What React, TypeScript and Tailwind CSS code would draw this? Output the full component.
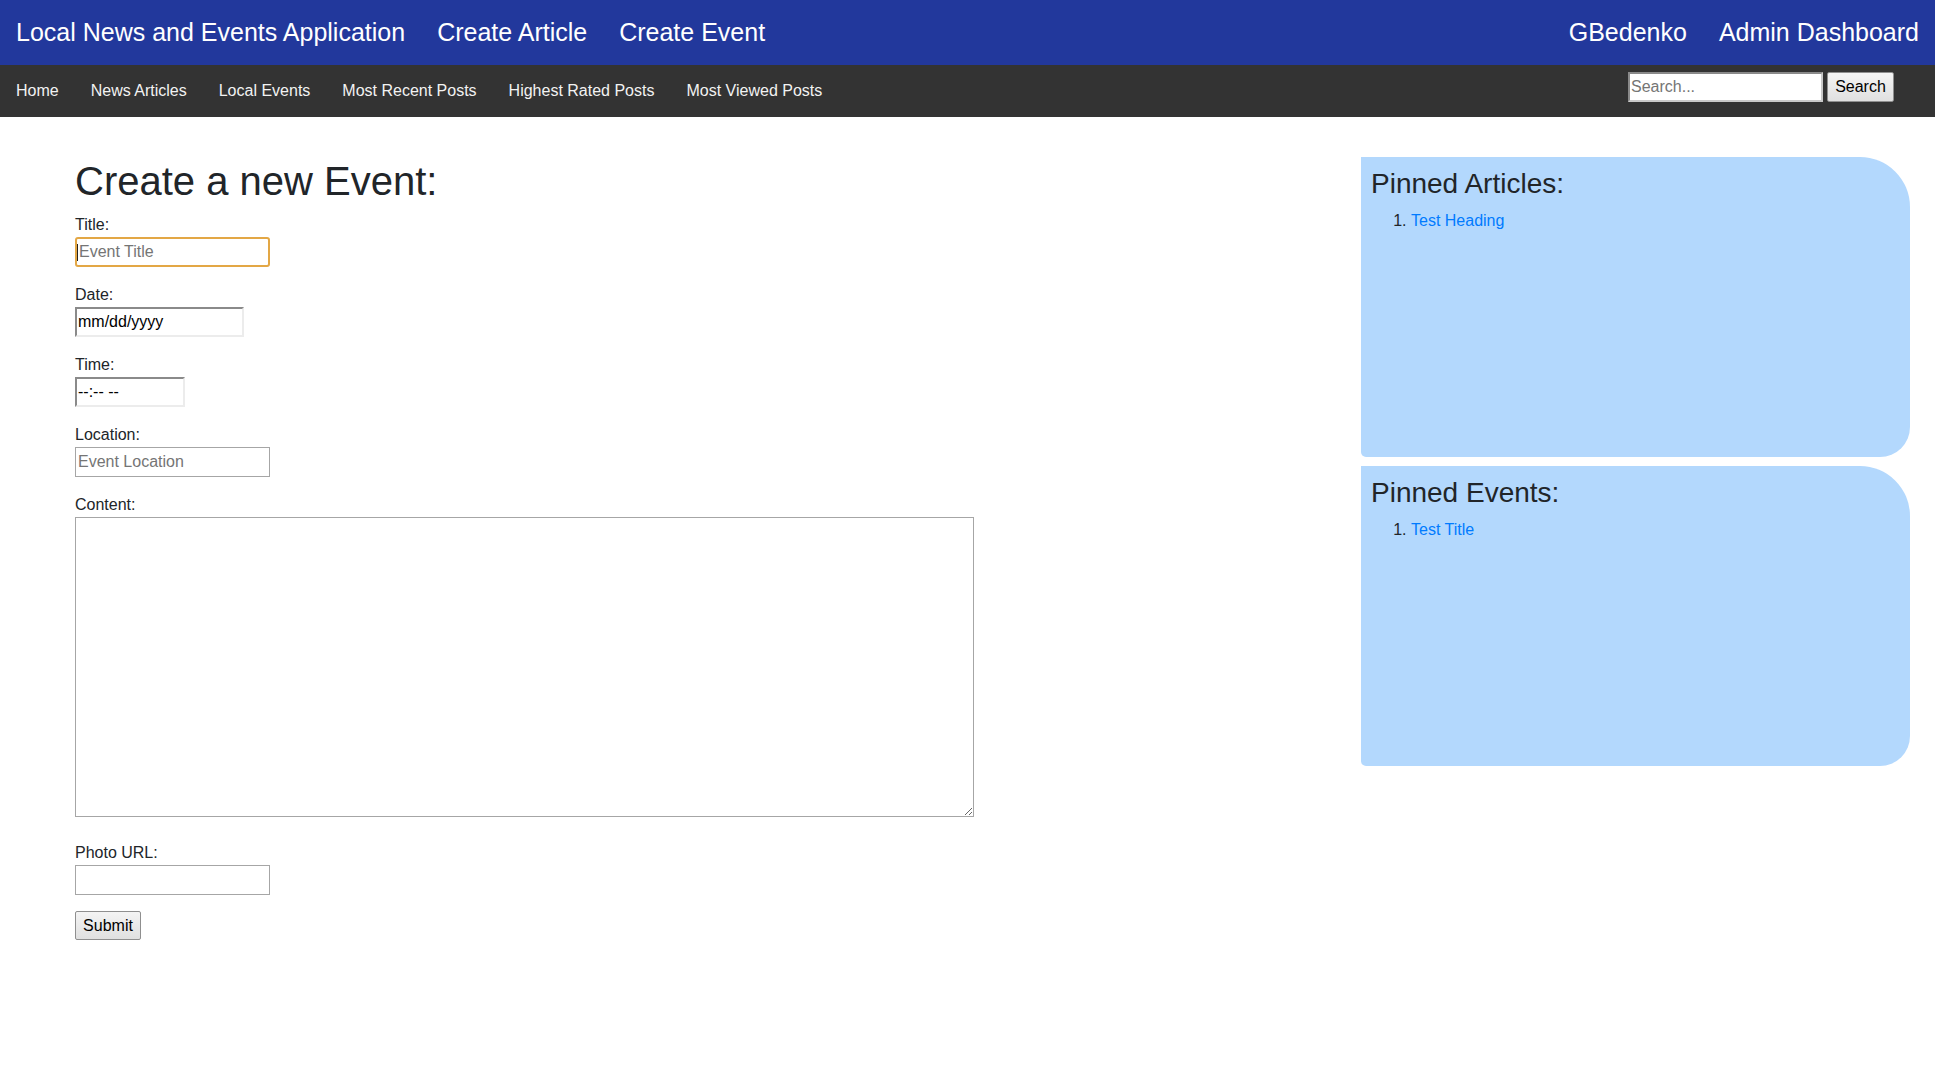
import React from 'react'

const font = { fontFamily: '"Liberation Sans", Arial, sans-serif' }

function Field({ label, children, last }: { label: string; children: React.ReactNode; last?: boolean }) {
  return (
    <div className={last ? 'mb-[24px]' : 'mb-4'}>
      <label className="block text-[16px] leading-[24px] text-[#212529]">{label}</label>
      {children}
    </div>
  )
}

export default function App() {
  const topLinks = ['Local News and Events Application', 'Create Article', 'Create Event']
  const navLinks = ['Home', 'News Articles', 'Local Events', 'Most Recent Posts', 'Highest Rated Posts', 'Most Viewed Posts']

  return (
    <div className="min-h-screen bg-white" style={font}>
      <header className="h-[65px] bg-[#22389c] flex items-center justify-between">
        <div className="flex items-center">
          {topLinks.map((l) => (
            <a key={l} href="#" className="px-4 text-[25px] leading-[29px] text-white">
              {l}
            </a>
          ))}
        </div>
        <div className="flex items-center">
          <a href="#" className="px-4 text-[25px] leading-[29px] text-white">GBedenko</a>
          <a href="#" className="px-4 text-[25px] leading-[29px] text-white">Admin Dashboard</a>
        </div>
      </header>

      <nav className="h-[52px] bg-[#333333] flex justify-between">
        <div className="flex items-center">
          {navLinks.map((l) => (
            <a key={l} href="#" className="px-4 text-[16px] leading-[20px] text-[#f2f2f2]">
              {l}
            </a>
          ))}
        </div>
        <div className="flex items-start pt-[7px] pr-[41px] gap-[4px]">
          <input
            type="text"
            placeholder="Search..."
            className="w-[195px] h-[30px] px-[1px] bg-white text-[16px] text-black placeholder:text-[#757575] border-2 border-t-[#8a8a8a] border-l-[#8a8a8a] border-r-[#c9c9c9] border-b-[#c9c9c9] outline-none"
          />
          <button className="w-[67px] h-[30px] text-[16px] text-black bg-gradient-to-b from-[#f4f4f4] to-[#e0e0e0] border border-[#8f8f8f] rounded-[2px]">
            Search
          </button>
        </div>
      </nav>

      <main className="flex pt-[40px]">
        <section className="flex-1 pl-[75px]">
          <h1 className="text-[40px] leading-[48px] font-medium text-[#212529] mb-2">Create a new Event:</h1>

          <Field label="Title:">
            <div className="relative w-[195px] h-[30px]">
              <input
                type="text"
                placeholder="Event Title"
                className="w-[195px] h-[30px] px-[2px] text-[16px] placeholder:text-[#757575] border-2 border-[#e3a745] rounded-[3px] outline-none"
              />
              <span className="absolute left-[2px] top-[7px] w-px h-[17px] bg-[#222]" />
            </div>
          </Field>

          <Field label="Date:">
            <input
              type="text"
              defaultValue="mm/dd/yyyy"
              className="block w-[169px] h-[30px] px-[1px] text-[16px] text-black border-2 border-t-[#8a8a8a] border-l-[#8a8a8a] border-r-[#ececec] border-b-[#ececec] outline-none"
            />
          </Field>

          <Field label="Time:">
            <input
              type="text"
              defaultValue="--:-- --"
              className="block w-[110px] h-[30px] px-[1px] text-[16px] text-black border-2 border-t-[#8a8a8a] border-l-[#8a8a8a] border-r-[#ececec] border-b-[#ececec] outline-none"
            />
          </Field>

          <Field label="Location:">
            <input
              type="text"
              placeholder="Event Location"
              className="block w-[195px] h-[30px] px-[2px] text-[16px] placeholder:text-[#757575] border border-[#a6a6a6] outline-none"
            />
          </Field>

          <Field label="Content:" last>
            <textarea className="block w-[899px] h-[300px] border border-[#a6a6a6] outline-none" />
          </Field>

          <Field label="Photo URL:">
            <input
              type="text"
              className="block w-[195px] h-[30px] px-[2px] text-[16px] border border-[#a6a6a6] outline-none"
            />
          </Field>

          <button className="w-[66px] h-[29px] text-[16px] text-black bg-gradient-to-b from-[#f4f4f4] to-[#e0e0e0] border border-[#8f8f8f] rounded-[2px]">
            Submit
          </button>
        </section>

        <aside className="w-[549px] mr-[25px] flex flex-col gap-[9px]">
          <div className="h-[300px] bg-[#b3d8fd] p-[10px] rounded-[0_50px_30px_5px]">
            <h3 className="text-[28px] leading-[33.6px] font-medium text-[#212529] mb-2">Pinned Articles:</h3>
            <ol className="list-decimal pl-[40px] text-[16px] leading-[24px] text-[#212529]">
              <li>
                <a href="#" className="text-[#007bff]">Test Heading</a>
              </li>
            </ol>
          </div>
          <div className="h-[300px] bg-[#b3d8fd] p-[10px] rounded-[0_50px_30px_5px]">
            <h3 className="text-[28px] leading-[33.6px] font-medium text-[#212529] mb-2">Pinned Events:</h3>
            <ol className="list-decimal pl-[40px] text-[16px] leading-[24px] text-[#212529]">
              <li>
                <a href="#" className="text-[#007bff]">Test Title</a>
              </li>
            </ol>
          </div>
        </aside>
      </main>
    </div>
  )
}
